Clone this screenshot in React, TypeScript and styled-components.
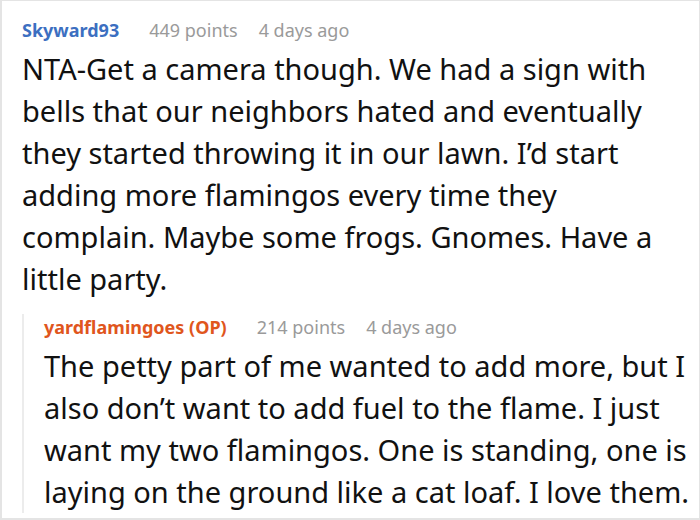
import { createGlobalStyle } from "styled-components";
import styled from "styled-components";

const GlobalStyle = createGlobalStyle`
	html, body {
		margin: 0;
		padding: 0;
		background: #fff;
	}
	body {
		font-family: "Noto Sans", "Open Sans", sans-serif;
		color: #111;
	}
`;

const Frame = styled.div`
	width: 700px;
	height: 520px;
	box-sizing: border-box;
	border: 1px solid #e4e4e4;
	border-left-width: 2px;
	border-bottom-width: 2px;
	padding: 16px 4px 0 20px;
	overflow: hidden;
`;

const CommentBox = styled.div<{ nested?: boolean }>`
	display: flex;
	flex-direction: column;
	${p =>
		p.nested &&
		`
		margin-top: 14px;
		border-left: 2px solid #ececec;
		padding-left: 20px;
	`}
`;

const Meta = styled.div`
	display: flex;
	align-items: baseline;
	font-size: 18px;
	line-height: 26px;
`;

const Author = styled.span<{ op?: boolean }>`
	font-weight: 700;
	color: ${p => (p.op ? "#e0561d" : "#3c6fc1")};
`;

const MetaInfo = styled.span<{ gap: number }>`
	color: #9a9a9a;
	margin-left: ${p => p.gap}px;
`;

const Body = styled.p`
	margin: 5px 0 0;
	font-size: 29px;
	line-height: 42px;
`;

interface CommentProps {
	author: string;
	op?: boolean;
	points: number;
	age: string;
	text: string;
	nested?: boolean;
}

function Comment({ author, op, points, age, text, nested }: CommentProps) {
	return (
		<CommentBox nested={nested}>
			<Meta>
				<Author op={op}>{author}</Author>
				<MetaInfo gap={30}>{points} points</MetaInfo>
				<MetaInfo gap={21}>{age}</MetaInfo>
			</Meta>
			<Body>{text}</Body>
		</CommentBox>
	);
}

export default function App() {
	return (
		<>
			<GlobalStyle />
			<Frame>
				<Comment
					author="Skyward93"
					points={449}
					age="4 days ago"
					text="NTA-Get a camera though. We had a sign with bells that our neighbors hated and eventually they started throwing it in our lawn. I’d start adding more flamingos every time they complain. Maybe some frogs. Gnomes. Have a little party."
				/>
				<Comment
					nested
					author="yardflamingoes (OP)"
					op
					points={214}
					age="4 days ago"
					text="The petty part of me wanted to add more, but I also don’t want to add fuel to the flame. I just want my two flamingos. One is standing, one is laying on the ground like a cat loaf. I love them."
				/>
			</Frame>
		</>
	);
}
